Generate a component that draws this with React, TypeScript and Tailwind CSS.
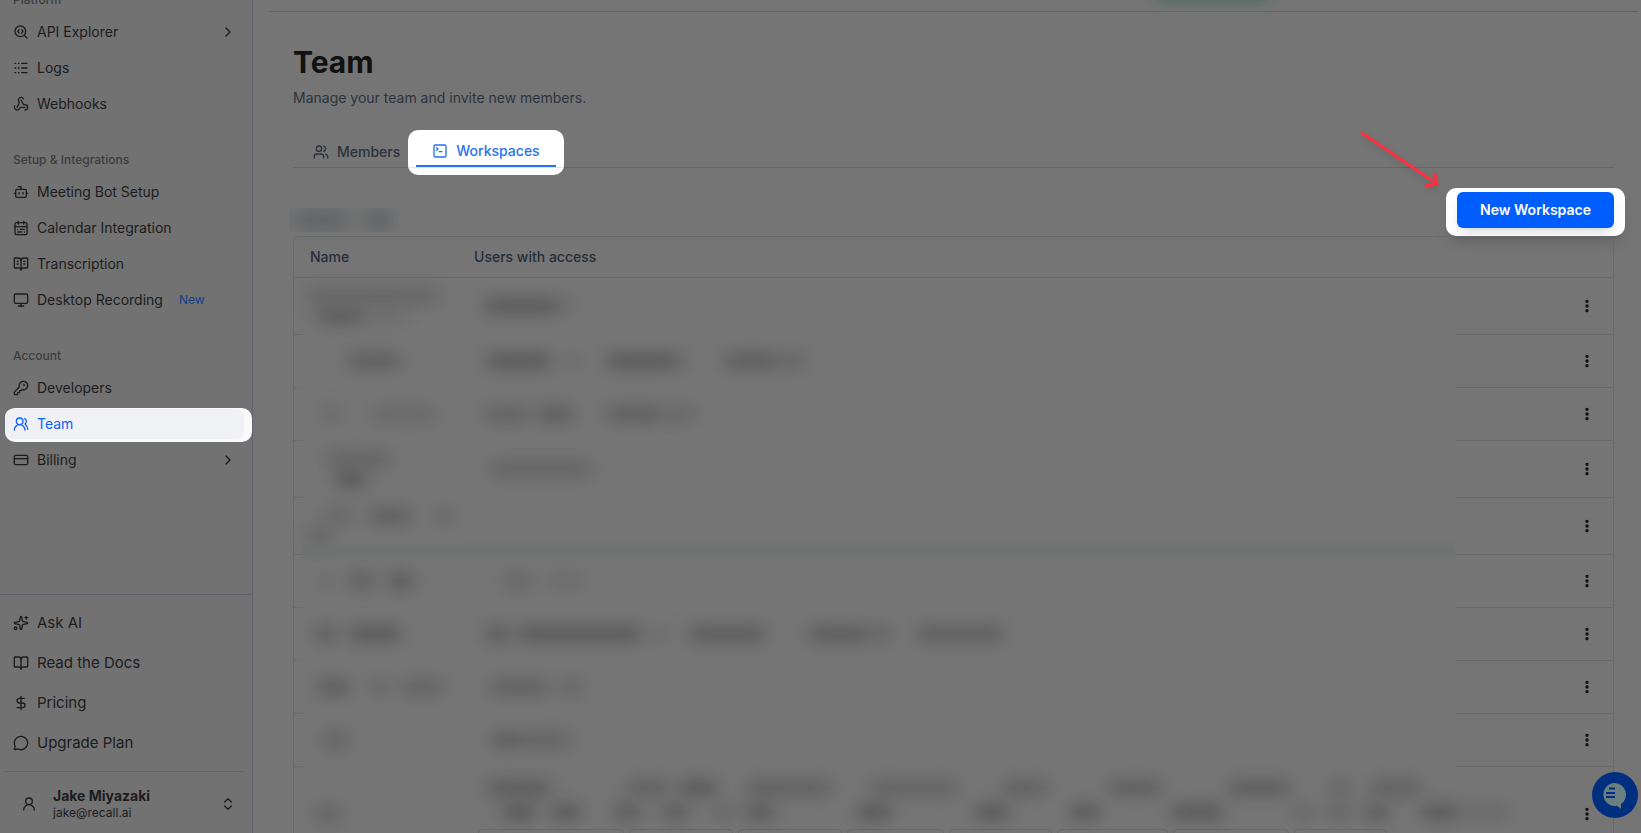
import React from 'react';
import {
  BookOpen,
  BookOpenText,
  Bot,
  CalendarRange,
  ChevronRight,
  ChevronsUpDown,
  CreditCard,
  DollarSign,
  EllipsisVertical,
  KeyRound,
  Logs,
  LucideIcon,
  MessageCircle,
  Monitor,
  SearchCode,
  Sparkles,
  SquareTerminal,
  UserRound,
  Users,
  UsersRound,
  Webhook,
} from 'lucide-react';

interface NavItem {
  label: string;
  icon: LucideIcon;
  expandable?: boolean;
  active?: boolean;
  badge?: string;
}

// [start within the column, width, opacity]
type Smudge = [number, number, number];

interface Row {
  height: string;
  name: Smudge[][];
  users: Smudge[][];
}

const sections: { title: string; items: NavItem[] }[] = [
  {
    title: 'Platform',
    items: [
      { label: 'API Explorer', icon: SearchCode, expandable: true },
      { label: 'Logs', icon: Logs },
      { label: 'Webhooks', icon: Webhook },
    ],
  },
  {
    title: 'Setup & Integrations',
    items: [
      { label: 'Meeting Bot Setup', icon: Bot },
      { label: 'Calendar Integration', icon: CalendarRange },
      { label: 'Transcription', icon: BookOpenText },
      { label: 'Desktop Recording', icon: Monitor, badge: 'New' },
    ],
  },
  {
    title: 'Account',
    items: [
      { label: 'Developers', icon: KeyRound },
      { label: 'Team', icon: UsersRound, active: true },
      { label: 'Billing', icon: CreditCard, expandable: true },
    ],
  },
];

const footerItems: NavItem[] = [
  { label: 'Ask AI', icon: Sparkles },
  { label: 'Read the Docs', icon: BookOpen },
  { label: 'Pricing', icon: DollarSign },
  { label: 'Upgrade Plan', icon: MessageCircle },
];

const rows: Row[] = [
  {
    height: 'h-[57px]',
    name: [[[4, 132, 0.5]], [[14, 46, 0.8], [62, 40, 0.25]]],
    users: [[[18, 76, 0.85], [92, 16, 0.2]]],
  },
  {
    height: 'h-[53px]',
    name: [[[44, 54, 0.7]]],
    users: [[[20, 66, 0.85], [98, 20, 0.25], [140, 74, 0.85], [214, 10, 0.2], [258, 54, 0.75], [312, 28, 0.5]]],
  },
  {
    height: 'h-[53px]',
    name: [[[18, 20, 0.35], [70, 62, 0.4]]],
    users: [[[18, 46, 0.6], [70, 38, 0.75], [140, 56, 0.7], [196, 34, 0.45]]],
  },
  {
    height: 'h-[57px]',
    name: [[[24, 64, 0.55]], [[32, 32, 0.95]]],
    users: [[[24, 102, 0.55]]],
  },
  {
    height: 'h-[57px]',
    name: [[[20, 30, 0.4], [66, 42, 0.7], [131, 20, 0.45]], [[4, 24, 0.6]]],
    users: [],
  },
  {
    height: 'h-[53px]',
    name: [[[16, 14, 0.3], [46, 26, 0.75], [84, 28, 0.85]]],
    users: [[[38, 28, 0.5], [82, 36, 0.3]]],
  },
  {
    height: 'h-[53px]',
    name: [[[11, 24, 0.75], [46, 52, 0.9]]],
    users: [
      [[18, 28, 0.75], [52, 124, 0.9], [186, 16, 0.3], [222, 78, 0.8], [342, 60, 0.8], [402, 24, 0.55], [450, 88, 0.7]],
    ],
  },
  {
    height: 'h-[53px]',
    name: [[[14, 34, 0.75], [66, 22, 0.4], [98, 42, 0.6]]],
    users: [[[24, 58, 0.65], [92, 26, 0.45]]],
  },
  {
    height: 'h-[53px]',
    name: [[[18, 28, 0.6]]],
    users: [[[25, 34, 0.75], [58, 46, 0.6]]],
  },
  {
    height: 'h-[96px]',
    name: [[[11, 28, 0.6]]],
    users: [
      [
        [20, 66, 0.8], [160, 44, 0.65], [212, 40, 0.85], [280, 86, 0.65], [404, 88, 0.6], [536, 46, 0.65],
        [642, 54, 0.7], [762, 62, 0.75], [864, 20, 0.6], [904, 52, 0.65],
      ],
      [
        [36, 34, 0.95], [84, 32, 0.9], [146, 30, 0.8], [194, 30, 0.75], [246, 24, 0.45], [278, 32, 0.85],
        [390, 36, 0.95], [508, 36, 0.9], [604, 30, 0.95], [704, 54, 0.9], [828, 20, 0.5], [862, 22, 0.6],
        [896, 28, 0.75], [954, 40, 0.85], [998, 44, 0.35],
      ],
    ],
  },
];

const chips = [146, 104, 104, 97, 103, 111, 116, 93];

const Smudges: React.FC<{ lines: Smudge[][]; spaced?: boolean }> = ({ lines, spaced }) => (
  <div className={spaced ? 'flex flex-col gap-2' : 'flex flex-col gap-1'} aria-hidden="true">
    {lines.map((line, i) => (
      <div key={i} className="flex blur-[8px]">
        {line.map(([start, width, opacity], j) => {
          const marginLeft = j === 0 ? start : start - line[j - 1][0] - line[j - 1][1];
          return (
            <span
              key={j}
              className="h-4 shrink-0 rounded-full bg-[#565656]"
              style={{ marginLeft, width, opacity }}
            />
          );
        })}
      </div>
    ))}
  </div>
);

const NavLink: React.FC<{ item: NavItem }> = ({ item }) => {
  const Icon = item.icon;
  if (item.active) {
    return (
      <a
        href="#team"
        aria-current="page"
        className="mt-0.5 flex h-[34px] items-center rounded-[10px] bg-[#fafafa] pt-px pr-2 pb-[3px] text-[#0f62fe]"
      >
        <span className="flex h-full flex-1 items-center gap-2 rounded-lg bg-[#f0f1f4] pl-2">
          <Icon size={16} />
          {item.label}
        </span>
      </a>
    );
  }
  return (
    <a href="#nav" className="flex h-9 items-center gap-2 pr-4 pl-2">
      <Icon size={16} />
      <span>{item.label}</span>
      {item.badge && <span className="ml-2 text-xs text-[#123f8c]">{item.badge}</span>}
      {item.expandable && <ChevronRight size={16} className="ml-auto" />}
    </a>
  );
};

const Sidebar: React.FC = () => (
  <aside className="flex w-[253px] shrink-0 flex-col border-r border-[#63646b] bg-[#727272] text-[#1c1c1e]">
    <nav className="-mt-3.5 flex min-h-0 flex-1 flex-col gap-6 overflow-hidden pl-[5px] text-sm">
      {sections.map((section) => (
        <div key={section.title}>
          <h2 className="pl-2 text-xs leading-7 font-medium text-[#3c3c3e]">{section.title}</h2>
          {section.items.map((item) => (
            <NavLink key={item.label} item={item} />
          ))}
        </div>
      ))}
    </nav>
    <div className="border-t border-[#63646b] pt-2 pr-2 pl-[5px]">
      {footerItems.map(({ label, icon: Icon }) => (
        <a key={label} href="#more" className="flex h-10 items-center gap-2 pl-2 text-[15px]">
          <Icon size={16} />
          {label}
        </a>
      ))}
      <button className="mt-2 flex h-[62px] w-full items-center border-t border-[#656565] pt-0.5 pr-2 pl-4 text-left">
        <UserRound size={16} />
        <span className="ml-4 flex flex-col">
          <span className="text-sm leading-[18px] font-bold">Jake Miyazaki</span>
          <span className="text-xs leading-4">jake@recall.ai</span>
        </span>
        <ChevronsUpDown size={16} className="ml-auto" />
      </button>
    </div>
  </aside>
);

const Tabs: React.FC = () => (
  <div role="tablist" className="mt-5 flex h-10 items-end border-b border-[#666666] pl-1 text-sm font-medium">
    <button role="tab" aria-selected="false" className="flex h-8 items-center gap-2 px-4 pt-0.5 text-[#2c323b]">
      <Users size={16} />
      Members
    </button>
    <button
      role="tab"
      aria-selected="true"
      className="relative isolate flex h-[34px] items-center gap-2 px-4 pt-0.5 text-[#2673f0]"
    >
      <span className="absolute -inset-x-2 -top-[3px] -bottom-2 -z-10 rounded-[10px] bg-white" />
      <SquareTerminal size={16} />
      Workspaces
      <span className="absolute inset-x-0 bottom-0 h-0.5 bg-[#2673f0]" />
      <span className="absolute -inset-x-2 top-full h-px bg-[#e2e4e8]" />
    </button>
  </div>
);

const WorkspaceTable: React.FC = () => (
  <div className="relative rounded-t-md border border-b-0 border-[#696969]">
    <table className="w-full table-fixed border-collapse text-sm">
      <colgroup>
        <col className="w-[9px]" />
        <col className="w-[155px]" />
        <col />
        <col className="w-[158px]" />
      </colgroup>
      <thead>
        <tr className="h-10 border-b border-[#696969] text-left text-[#262d3a]">
          <th colSpan={2} className="pl-4 font-medium">Name</th>
          <th className="pl-4 font-medium">Users with access</th>
          <th aria-label="Actions" />
        </tr>
      </thead>
      <tbody>
        {rows.map((row, i) => {
          const isLast = i === rows.length - 1;
          return (
            <tr key={i} className={row.height}>
              <td className="border-b border-[#696969]" />
              <td className="p-0">
                <Smudges lines={row.name} />
              </td>
              <td className={isLast ? 'pt-3.5 pl-2 align-top' : 'p-0 pl-2'}>
                <Smudges lines={row.users} spaced={isLast} />
                {isLast && (
                  <div className="mt-[9px] flex gap-[5px] pl-3">
                    {chips.map((width, j) => (
                      <span key={j} className="h-7 shrink-0 rounded border border-[#6a6a6a]" style={{ width }} />
                    ))}
                  </div>
                )}
              </td>
              <td className="border-b border-[#696969] pr-[18px] pb-0.5 text-right">
                <button aria-label="Workspace actions" className="align-middle text-[#0b0b0f]">
                  <EllipsisVertical size={16} strokeWidth={3} />
                </button>
              </td>
            </tr>
          );
        })}
      </tbody>
    </table>
    <div className="pointer-events-none absolute top-[300px] right-[158px] left-2 h-7 bg-linear-to-b from-transparent via-[#6d706f]/60 to-transparent" />
  </div>
);

const App: React.FC = () => (
  <div className="flex h-screen overflow-hidden bg-[#757575] font-[Inter,sans-serif]">
    <Sidebar />

    <main className="relative min-w-0 flex-1 overflow-hidden pl-4">
      <div className="absolute -top-4 right-[371px] h-[18px] w-[116px] rounded-full bg-[#4f6a60] blur-[6px]" />
      <div className="mr-[3px] h-3 border-b border-[#656565]" />

      <div className="pt-8 pr-[27px] pl-6">
        <h1 className="text-3xl leading-9 font-bold text-[#111111]">Team</h1>
        <p className="mt-2 text-sm text-[#2c333d]">Manage your team and invite new members.</p>

        <Tabs />

        <div className="mt-5 flex items-end justify-between">
          <div className="mb-1 -ml-1 flex h-6 w-[110px] items-center overflow-hidden">
            <div className="flex gap-4 pl-1 blur-[8px]">
              <span className="h-5 w-14 rounded-full bg-[#616468]" />
              <span className="h-5 w-7 rounded-full bg-[#5e6266]" />
            </div>
          </div>
          <div className="relative -mr-[11px] rounded-[10px] bg-white px-[11px] pt-1 pb-2 shadow-lg">
            <button className="h-9 w-[157px] rounded-md bg-[#005eff] text-sm font-semibold text-white shadow-lg">
              New Workspace
            </button>
            <svg
              className="absolute -top-[60px] right-[183px] drop-shadow-md"
              width="84"
              height="62"
              viewBox="0 0 84 62"
              fill="none"
              stroke="#ff3040"
              strokeWidth="3"
              strokeLinecap="round"
              strokeLinejoin="round"
            >
              <path d="M4 5 79 56M77 46 79 56 68 58" />
            </svg>
          </div>
        </div>

        <WorkspaceTable />
      </div>

      <button
        aria-label="Open chat"
        className="absolute right-[3px] bottom-[15px] flex size-[46px] items-center justify-center rounded-full bg-[#002f80]"
      >
        <svg width="26" height="28" viewBox="0 0 26 28">
          <path d="M13 2a11.5 11.5 0 1 0 2 22.8l4 3.2v-5A11.5 11.5 0 0 0 13 2Z" fill="#6b7e80" />
          <path d="M7 7.500h6M4 12h9M4 16h9" stroke="#002f80" strokeWidth="2" />
        </svg>
      </button>
    </main>
  </div>
);

export default App;
